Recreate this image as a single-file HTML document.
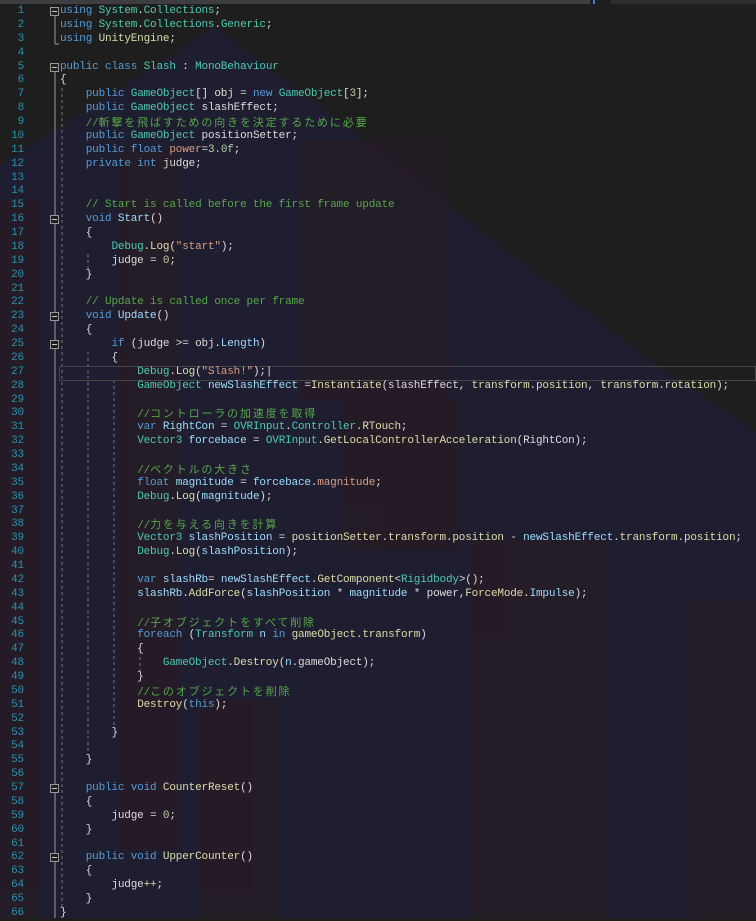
<!DOCTYPE html>
<html><head><meta charset="utf-8"><style>
html,body{margin:0;padding:0;width:756px;height:918px;overflow:hidden;background:#1e1e1e}
#bg{position:absolute;left:0;top:0}
.code{position:absolute;left:0;top:5px;font-family:"Liberation Mono","Noto Sans CJK JP",monospace;font-size:11px;letter-spacing:-0.17px;line-height:13.875px;white-space:pre;color:#dcdcdc}
.ln{position:absolute;left:0;width:24px;text-align:right;color:#2b91af}
.t{position:absolute;left:60px}
.k{color:#569cd6}.ty{color:#4ec9b0}.c{color:#57a64a}.s{color:#d69d85}.m{color:#dcdcaa}.n{color:#b5cea8}.v{color:#9cdcfe}
.j{letter-spacing:1.85px;font-family:"Noto Sans CJK JP",sans-serif}
.fb{position:absolute;left:50px;width:7px;height:7px;border:1px solid #999;background:#1e1e1e}
.fb:after{content:"";position:absolute;left:1px;top:3px;width:5px;height:1px;background:#ccc}
</style></head><body>
<svg id="bg" width="756" height="918">
<rect x="0" y="0" width="756" height="918" fill="#1e1e1e"/>
<polygon points="0,165 215,27 656,365 756,432 756,918 0,918" fill="#1f1e30"/>
<g fill="#261b26" opacity="0.8">
<rect x="0" y="200" width="40" height="718"/>
<rect x="120" y="150" width="60" height="700"/>
<rect x="300" y="140" width="150" height="260"/>
<rect x="340" y="400" width="120" height="150"/>
<rect x="470" y="540" width="140" height="378"/>
<rect x="690" y="600" width="66" height="318"/>
<rect x="200" y="700" width="80" height="218"/>
</g>
<rect x="0" y="0" width="590" height="4" fill="#3e3e42"/>
<rect x="593" y="0" width="2" height="4" fill="#3c7bd6"/>
<rect x="610" y="0" width="146" height="4" fill="#2d2d30"/>
<line x1="55" y1="12" x2="55" y2="44" stroke="#999" stroke-width="1"/>
<line x1="55" y1="44" x2="59" y2="44" stroke="#999"/>
<line x1="55" y1="72" x2="55" y2="918" stroke="#999" stroke-width="1"/>
<g stroke="#777" stroke-dasharray="3,3">
<line x1="62" y1="88" x2="62" y2="907"/>
<line x1="88" y1="254" x2="88" y2="270"/>
<line x1="88" y1="352" x2="88" y2="754"/>
<line x1="114" y1="380" x2="114" y2="727"/>
<line x1="140" y1="657" x2="140" y2="671"/>
</g>
<rect x="59.5" y="366.5" width="696" height="14" fill="none" stroke="#464646"/>
</svg>
<div class="code">
<div id="L"></div>
</div>
<script>
var L=[
'<span class="k">using</span> <span class="ty">System</span>.<span class="ty">Collections</span>;',
'<span class="k">using</span> <span class="ty">System</span>.<span class="ty">Collections</span>.<span class="ty">Generic</span>;',
'<span class="k">using</span> <span class="m">UnityEngine</span>;',
'',
'<span class="k">public class</span> <span class="ty">Slash</span> : <span class="ty">MonoBehaviour</span>',
'{',
'    <span class="k">public</span> <span class="ty">GameObject</span>[] obj = <span class="k">new</span> <span class="ty">GameObject</span>[<span class="n">3</span>];',
'    <span class="k">public</span> <span class="ty">GameObject</span> slashEffect;',
'    <span class="c">//<span class="j">斬撃を飛ばすための向きを決定するために必要</span></span>',
'    <span class="k">public</span> <span class="ty">GameObject</span> positionSetter;',
'    <span class="k">public float</span> <span class="s">power</span>=<span class="n">3.0f</span>;',
'    <span class="k">private int</span> judge;',
'',
'',
'    <span class="c">// Start is called before the first frame update</span>',
'    <span class="k">void</span> <span class="v">Start</span>()',
'    {',
'        <span class="ty">Debug</span>.<span class="m">Log</span>(<span class="s">"start"</span>);',
'        judge = <span class="n">0</span>;',
'    }',
'',
'    <span class="c">// Update is called once per frame</span>',
'    <span class="k">void</span> <span class="v">Update</span>()',
'    {',
'        <span class="k">if</span> (judge &gt;= obj.<span class="v">Length</span>)',
'        {',
'            <span class="ty">Debug</span>.<span class="m">Log</span>(<span class="s">"Slash!"</span>);|',
'            <span class="ty">GameObject</span> <span class="v">newSlashEffect</span> =<span class="m">Instantiate</span>(slashEffect, <span class="m">transform</span>.<span class="m">position</span>, <span class="m">transform</span>.<span class="m">rotation</span>);',
'',
'            <span class="c">//<span class="j">コントローラの加速度を取得</span></span>',
'            <span class="k">var</span> <span class="v">RightCon</span> = <span class="ty">OVRInput</span>.<span class="ty">Controller</span>.<span class="m">RTouch</span>;',
'            <span class="ty">Vector3</span> <span class="v">forcebace</span> = <span class="ty">OVRInput</span>.<span class="m">GetLocalControllerAcceleration</span>(RightCon);',
'',
'            <span class="c">//<span class="j">ベクトルの大きさ</span></span>',
'            <span class="k">float</span> <span class="v">magnitude</span> = <span class="v">forcebace</span>.<span class="s">magnitude</span>;',
'            <span class="ty">Debug</span>.<span class="m">Log</span>(<span class="v">magnitude</span>);',
'',
'            <span class="c">//<span class="j">力を与える向きを計算</span></span>',
'            <span class="ty">Vector3</span> <span class="v">slashPosition</span> = <span class="m">positionSetter</span>.<span class="m">transform</span>.<span class="m">position</span> - <span class="v">newSlashEffect</span>.<span class="m">transform</span>.<span class="m">position</span>;',
'            <span class="ty">Debug</span>.<span class="m">Log</span>(<span class="v">slashPosition</span>);',
'',
'            <span class="k">var</span> <span class="v">slashRb</span>= <span class="v">newSlashEffect</span>.<span class="m">GetComponent</span>&lt;<span class="ty">Rigidbody</span>&gt;();',
'            <span class="v">slashRb</span>.<span class="m">AddForce</span>(<span class="v">slashPosition</span> * <span class="v">magnitude</span> * power,<span class="m">ForceMode</span>.<span class="v">Impulse</span>);',
'',
'            <span class="c">//<span class="j">子オブジェクトをすべて削除</span></span>',
'            <span class="k">foreach</span> (<span class="ty">Transform</span> <span class="v">n</span> <span class="k">in</span> <span class="m">gameObject</span>.<span class="m">transform</span>)',
'            {',
'                <span class="ty">GameObject</span>.<span class="m">Destroy</span>(<span class="v">n</span>.gameObject);',
'            }',
'            <span class="c">//<span class="j">このオブジェクトを削除</span></span>',
'            <span class="m">Destroy</span>(<span class="k">this</span>);',
'',
'        }',
'',
'    }',
'',
'    <span class="k">public void</span> <span class="m">CounterReset</span>()',
'    {',
'        judge = <span class="n">0</span>;',
'    }',
'',
'    <span class="k">public void</span> <span class="m">UpperCounter</span>()',
'    {',
'        judge<span class="m">++</span>;',
'    }',
'}'
];
var h='';var folds=[1,5,16,23,25,57,62];
for(var i=0;i<L.length;i++){var y=(i*13.875).toFixed(2);
h+='<div class="ln" style="top:'+y+'px">'+(i+1)+'</div><div class="t" style="top:'+y+'px">'+L[i]+'</div>';
if(folds.indexOf(i+1)>=0)h+='<div class="fb" style="top:'+(i*13.875+2).toFixed(2)+'px"></div>';}
document.getElementById('L').innerHTML=h;
</script>
</body></html>
